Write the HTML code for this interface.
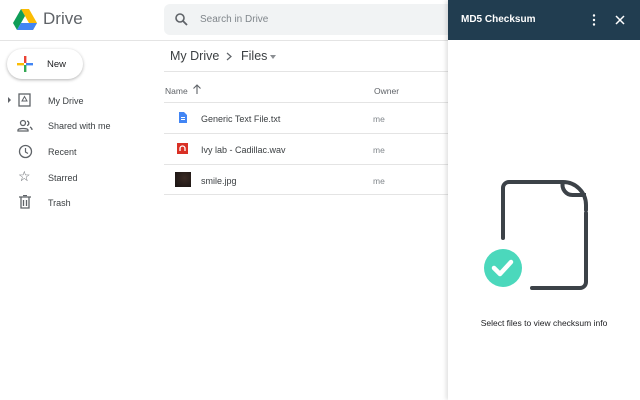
<!DOCTYPE html>
<html><head><style>
body{margin:0;width:640px;height:400px;overflow:hidden;font-family:"Liberation Sans",Arial,sans-serif;background:#fff;position:relative}
.a{position:absolute}
.t{font-size:9px;color:#3c4043}
.line{position:absolute;height:1px;background:#e4e4e4}
</style></head><body>
<svg class="a" style="left:13px;top:9px" width="24" height="22" viewBox="0 0 24 22">
<polygon points="8,0 16,0 24,14 20,21" fill="#fbbc04"/>
<polygon points="8,0 0,14 4,21 12,7" fill="#0f9d58"/>
<polygon points="4,21 20,21 24,14 8,14" fill="#4285f4"/>
</svg>
<div class="a" style="left:43px;top:9px;font-size:17px;color:#5f6368">Drive</div>
<div class="a" style="left:164px;top:4px;width:290px;height:31px;background:#f1f3f4;border-radius:6px"></div>
<svg class="a" style="left:175px;top:13px" width="13" height="13" viewBox="0 0 13 13"><circle cx="5" cy="5" r="4" fill="none" stroke="#5f6368" stroke-width="1.6"/><line x1="8" y1="8" x2="12" y2="12" stroke="#5f6368" stroke-width="1.8"/></svg>
<div class="a" style="left:200px;top:14px;font-size:10px;color:#80868b">Search in Drive</div>
<div class="line" style="left:0;top:40px;width:448px"></div>
<div class="a" style="left:7px;top:49px;width:76px;height:30px;border-radius:16px;background:#fff;box-shadow:0 1px 3px rgba(0,0,0,.3)"></div>
<svg class="a" style="left:17px;top:56px" width="16" height="16" viewBox="0 0 16 16"><rect x="7" y="0" width="2.4" height="7" fill="#ea4335"/><rect x="9" y="7" width="7" height="2.4" fill="#4285f4"/><rect x="7" y="9" width="2.4" height="7" fill="#34a853"/><rect x="0" y="7" width="7" height="2.4" fill="#fbbc04"/></svg>
<div class="a" style="left:47px;top:59px;font-size:9.5px;color:#202124">New</div>
<div class="a" style="left:8px;top:97px;width:0;height:0;border-left:3px solid #5f6368;border-top:3px solid transparent;border-bottom:3px solid transparent"></div>
<svg class="a" style="left:18px;top:93px" width="14" height="14" viewBox="0 0 14 14"><rect x="1" y="1" width="11" height="12" fill="none" stroke="#5f6368" stroke-width="1.3"/><path d="M4 8 L6.5 3.5 L9 8Z" fill="none" stroke="#5f6368" stroke-width="1"/></svg>
<div class="a t" style="left:48px;top:96px">My Drive</div>
<svg class="a" style="left:17px;top:119px" width="16" height="13" viewBox="0 0 16 13"><circle cx="6" cy="4" r="2.5" fill="none" stroke="#5f6368" stroke-width="1.3"/><path d="M1 12 v-1 c0-2 10-2 10 0 v1z" fill="none" stroke="#5f6368" stroke-width="1.3"/><path d="M10 2 a2.3 2.3 0 0 1 0 4.5 M13 8 c1 .5 2 1 2 3" fill="none" stroke="#5f6368" stroke-width="1.3"/></svg>
<div class="a t" style="left:48px;top:121px">Shared with me</div>
<svg class="a" style="left:18px;top:144px" width="15" height="15" viewBox="0 0 15 15"><circle cx="7.5" cy="7.5" r="6" fill="none" stroke="#5f6368" stroke-width="1.3"/><path d="M7.5 4 v4 l2.5 1.5" fill="none" stroke="#5f6368" stroke-width="1.2"/></svg>
<div class="a t" style="left:48px;top:147px">Recent</div>
<div class="a" style="left:18px;top:168px;font-size:14px;color:#5f6368">☆</div>
<div class="a t" style="left:48px;top:173px">Starred</div>
<svg class="a" style="left:19px;top:195px" width="12" height="14" viewBox="0 0 12 14"><path d="M0 2 h12 M4 0.5 h4 M2 2 v11 h8 v-11 M4.5 5 v6 M7.5 5 v6" fill="none" stroke="#5f6368" stroke-width="1.3"/></svg>
<div class="a t" style="left:48px;top:198px">Trash</div>
<div class="a" style="left:170px;top:49px;font-size:12.5px;color:#3c4043">My Drive</div>
<svg class="a" style="left:226px;top:52px" width="6" height="9"><path d="M1 1 L5 4.5 L1 8" fill="none" stroke="#5f6368" stroke-width="1.2"/></svg>
<div class="a" style="left:241px;top:49px;font-size:12.5px;color:#3c4043">Files</div>
<div class="a" style="left:270px;top:55px;border-top:4px solid #8a8e92;border-left:3.5px solid transparent;border-right:3.5px solid transparent"></div>
<div class="line" style="left:164px;top:71px;width:284px"></div>
<div class="a" style="left:165px;top:86px;font-size:8.5px;color:#5f6368">Name</div>
<svg class="a" style="left:193px;top:84px" width="8" height="10"><path d="M4 10 V1 M0.5 4.5 L4 1 L7.5 4.5" fill="none" stroke="#5f6368" stroke-width="1.1"/></svg>
<div class="a" style="left:374px;top:86px;font-size:8.5px;color:#5f6368">Owner</div>
<div class="line" style="left:164px;top:102px;width:284px"></div>
<svg class="a" style="left:179px;top:112px" width="8" height="11" viewBox="0 0 8 11"><path d="M0 0 h5 l3 3 v8 h-8z" fill="#4285f4"/><rect x="2" y="5" width="4" height="1" fill="#fff"/><rect x="2" y="7" width="4" height="1" fill="#fff"/></svg>
<div class="a t" style="left:201px;top:114px">Generic Text File.txt</div>
<div class="a" style="left:373px;top:114px;font-size:8.5px;color:#80868b">me</div>
<div class="line" style="left:164px;top:133px;width:284px"></div>
<svg class="a" style="left:177px;top:143px" width="11" height="11" viewBox="0 0 11 11"><rect width="11" height="11" fill="#d93025"/><path d="M3 8 v-2.5 a2.5 2.5 0 0 1 5 0 v2.5" fill="none" stroke="#fff" stroke-width="1.3"/></svg>
<div class="a t" style="left:201px;top:145px">Ivy lab - Cadillac.wav</div>
<div class="a" style="left:373px;top:145px;font-size:8.5px;color:#80868b">me</div>
<div class="line" style="left:164px;top:164px;width:284px"></div>
<div class="a" style="left:175px;top:172px;width:16px;height:15px;background:radial-gradient(circle at 60% 40%,#3a2a24,#161211)"></div>
<div class="a t" style="left:201px;top:176px">smile.jpg</div>
<div class="a" style="left:373px;top:176px;font-size:8.5px;color:#80868b">me</div>
<div class="line" style="left:164px;top:194px;width:284px"></div>
<div class="a" style="left:448px;top:0;width:192px;height:400px;background:#fff;box-shadow:-2px 0 4px rgba(0,0,0,.12)"></div>
<div class="a" style="left:448px;top:0;width:192px;height:40px;background:#213d50"></div>
<div class="a" style="left:461px;top:14px;font-size:10px;font-weight:bold;color:#fff">MD5 Checksum</div>
<svg class="a" style="left:592px;top:14px" width="4" height="12"><circle cx="2" cy="1.5" r="1.2" fill="#fff"/><circle cx="2" cy="6" r="1.2" fill="#fff"/><circle cx="2" cy="10.5" r="1.2" fill="#fff"/></svg>
<svg class="a" style="left:615px;top:15px" width="10" height="10"><path d="M1 1 L9 9 M9 1 L1 9" stroke="#fff" stroke-width="1.5"/></svg>
<svg class="a" style="left:470px;top:175px" width="130" height="130" viewBox="470 175 130 130">
<path d="M503 238 V188 a6 6 0 0 1 6 -6 H563 a23 23 0 0 1 23 23 V210" fill="none" stroke="#3c4248" stroke-width="4" stroke-linecap="round"/>
<path d="M563 182 a10 10 0 0 0 10 13 H586" fill="none" stroke="#3c4248" stroke-width="4"/>
<path d="M586 213 V282 a6 6 0 0 1 -6 6 H532" fill="none" stroke="#3c4248" stroke-width="4" stroke-linecap="round"/>
<circle cx="503" cy="268" r="19" fill="#4bd8bc"/>
<path d="M494 268 l6 6 l11 -12" fill="none" stroke="#fff" stroke-width="4.5" stroke-linecap="round" stroke-linejoin="round"/>
</svg>
<div class="a" style="left:448px;top:318px;width:192px;text-align:center;font-size:8.5px;color:#202124">Select files to view checksum info</div>
</body></html>
